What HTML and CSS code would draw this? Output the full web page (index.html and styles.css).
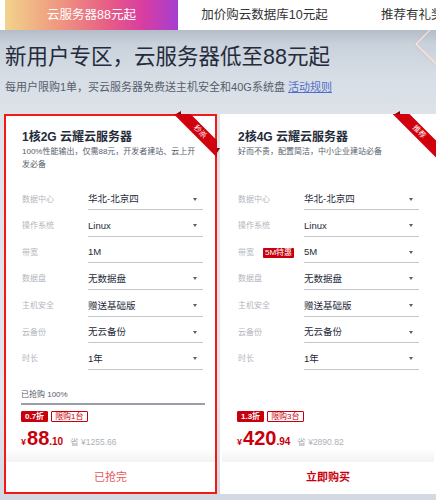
FILE: index.html
```html
<!DOCTYPE html>
<html lang="zh-CN">
<head>
<meta charset="utf-8">
<title>新用户专区</title>
<link rel="stylesheet" href="styles.css">
</head>
<body>
<div class="tabs">
  <div class="tab active">云服务器88元起</div>
  <div class="tab">加价购云数据库10元起</div>
  <div class="tab">推荐有礼奖励翻倍</div>
</div>
<div class="banner">
  <h1 class="headline">新用户专区，云服务器低至88元起</h1>
  <p class="sub">每用户限购1单，买云服务器免费送主机安全和40G系统盘 <a class="rule" href="#">活动规则</a></p>
</div>
<div class="cards">
  <div class="card selected">
    <div class="ribbon"><span>秒杀</span></div>
    <div class="body">
      <h2 class="title">1核2G 云耀云服务器</h2>
      <p class="desc">100%性能输出，仅需88元，开发者建站、云上开发必备</p>
      <div class="rows">
        <div class="row"><span class="label">数据中心</span><span class="select">华北-北京四<i class="caret"></i></span></div>
        <div class="row"><span class="label">操作系统</span><span class="select">Linux<i class="caret"></i></span></div>
        <div class="row"><span class="label">带宽</span><span class="select">1M</span></div>
        <div class="row"><span class="label">数据盘</span><span class="select">无数据盘<i class="caret"></i></span></div>
        <div class="row"><span class="label">主机安全</span><span class="select">赠送基础版<i class="caret"></i></span></div>
        <div class="row"><span class="label">云备份</span><span class="select">无云备份<i class="caret"></i></span></div>
        <div class="row"><span class="label">时长</span><span class="select">1年<i class="caret"></i></span></div>
      </div>
      <div class="progress">已抢购 100%</div>
      <div class="price-block">
        <div class="tags"><span class="tag solid">0.7折</span><span class="tag outline">限购1台</span></div>
        <div class="price"><span class="cur">¥</span><span class="int">88</span><span class="dec">.10</span><span class="save">省 ¥1255.66</span></div>
      </div>
    </div>
    <div class="footer sold">已抢完</div>
  </div>
  <div class="card">
    <div class="ribbon"><span>推荐</span></div>
    <div class="body">
      <h2 class="title">2核4G 云耀云服务器</h2>
      <p class="desc">好而不贵，配置简洁，中小企业建站必备</p>
      <div class="rows">
        <div class="row"><span class="label">数据中心</span><span class="select">华北-北京四<i class="caret"></i></span></div>
        <div class="row"><span class="label">操作系统</span><span class="select">Linux<i class="caret"></i></span></div>
        <div class="row"><span class="label">带宽<em class="hot">5M特惠</em></span><span class="select">5M<i class="caret"></i></span></div>
        <div class="row"><span class="label">数据盘</span><span class="select">无数据盘<i class="caret"></i></span></div>
        <div class="row"><span class="label">主机安全</span><span class="select">赠送基础版<i class="caret"></i></span></div>
        <div class="row"><span class="label">云备份</span><span class="select">无云备份<i class="caret"></i></span></div>
        <div class="row"><span class="label">时长</span><span class="select">1年<i class="caret"></i></span></div>
      </div>
      <div class="price-block">
        <div class="tags"><span class="tag solid">1.3折</span><span class="tag outline">限购3台</span></div>
        <div class="price"><span class="cur">¥</span><span class="int">420</span><span class="dec">.94</span><span class="save">省 ¥2890.82</span></div>
      </div>
    </div>
    <div class="footer">立即购买</div>
  </div>
</div>
</body>
</html>
```
FILE: styles.css
```css
html, body {
  margin: 0;
  padding: 0;
}
body {
  width: 436px;
  min-height: 500px;
  overflow: hidden;
  font-family: "Liberation Sans", "Noto Sans CJK SC", sans-serif;
  color: #252b3a;
  background: linear-gradient(to bottom, #b3bdc8 30px, #c9d1db 44px, #d6dde5 75px, #dee3e9 115px, #e3e7ed 400px, #d2d9e1 500px);
}

/* tabs */
.tabs {
  display: flex;
  height: 30px;
  padding-left: 5px;
  background: #fff;
  overflow: hidden;
  white-space: nowrap;
}
.tab {
  flex: 0 0 173px;
  line-height: 30px;
  text-align: center;
  font-size: 12.5px;
  color: #333;
}
.tab:last-child {
  flex-basis: 160px;
  text-align: left;
  padding-left: 30px;
}
.tab.active {
  color: #fff;
  background: linear-gradient(90deg, #f2d38c 0%, #ef9a80 30%, #e75c86 60%, #d83da2 80%, #a43fd0 100%);
}

/* banner */
.banner {
  position: relative;
  padding: 12px 0 0 5px;
  height: 72px;
  overflow: hidden;
}
.banner::after {
  content: "";
  position: absolute;
  left: 424px;
  top: -7px;
  width: 40px;
  height: 40px;
  border: 1px solid rgba(255, 236, 232, 0.95);
  box-shadow: 0 0 3px rgba(255, 170, 150, 0.7);
  transform: rotate(45deg);
}
.headline {
  margin: 0;
  font-size: 21.5px;
  line-height: 30px;
  font-weight: normal;
  color: #252b3a;
}
.sub {
  margin: 7px 0 0;
  font-size: 11px;
  line-height: 16px;
  color: #575d6c;
}
.rule {
  color: #526ecc;
  text-decoration: underline;
}

/* cards */
.cards {
  display: grid;
  grid-template-columns: 213px 216px;
  column-gap: 3px;
  padding-left: 4px;
}
.card {
  position: relative;
  height: 380px;
  box-sizing: border-box;
  background: #fff;
  border: 2px solid #fff;
  display: flex;
  flex-direction: column;
}
.card.selected {
  border-color: #f41919;
}
.card::before {
  content: "";
  position: absolute;
  top: -5px;
  right: 34px;
  width: 0;
  height: 0;
  border-left: 5px solid transparent;
  border-bottom: 3px solid #8a0009;
}
.card::after {
  content: "";
  position: absolute;
  top: 32px;
  right: -5px;
  width: 0;
  height: 0;
  border-left: 3px solid #8a0009;
  border-bottom: 5px solid transparent;
}
.ribbon {
  position: absolute;
  top: -2px;
  right: -2px;
  width: 44px;
  height: 44px;
  overflow: hidden;
  z-index: 2;
}
.ribbon span {
  position: absolute;
  left: -4px;
  top: 11.5px;
  width: 62px;
  height: 12px;
  line-height: 12px;
  text-align: center;
  background: #d0000c;
  color: #fff;
  font-size: 7.5px;
  transform: rotate(45deg);
}

.body {
  flex: 1;
  display: flex;
  flex-direction: column;
  padding: 13px 12px 9px 16px;
  background: linear-gradient(to bottom, #fff calc(100% - 14px), #f3f3f4 100%);
}
.title {
  margin: 0;
  font-size: 12px;
  line-height: 16px;
  font-weight: bold;
  color: #252b3a;
}
.desc {
  margin: 0;
  font-size: 8px;
  line-height: 13px;
  min-height: 26px;
  color: #575d6c;
}
.rows {
  margin-top: 18px;
  display: flex;
  flex-direction: column;
  gap: 5.67px;
}
.row {
  display: grid;
  grid-template-columns: 66px 115px;
  align-items: center;
}
.label {
  display: flex;
  align-items: center;
  gap: 9px;
  font-size: 8px;
  line-height: 20px;
  color: #b3b6bd;
}
.hot {
  font-style: normal;
  font-size: 8px;
  line-height: 10px;
  padding: 0 2px;
  background: #c7000b;
  color: #fff;
  border-radius: 1px;
}
.select {
  display: flex;
  justify-content: space-between;
  align-items: center;
  height: 20px;
  line-height: 20px;
  padding-right: 6px;
  border-bottom: 1px solid #c5c7cc;
  font-size: 9.5px;
  color: #252b3a;
}
.caret {
  width: 0;
  height: 0;
  border-left: 2.5px solid transparent;
  border-right: 2.5px solid transparent;
  border-top: 3px solid #575d6c;
}

.progress {
  margin: 19px 0 0 -1px;
  width: 184px;
  padding-bottom: 2px;
  border-bottom: 2px solid #9a9ea6;
  font-size: 8px;
  line-height: 12px;
  color: #575d6c;
}

.price-block {
  margin-top: auto;
  margin-left: -1px;
}
.tags {
  display: flex;
  gap: 3px;
}
.tag {
  font-size: 8px;
  line-height: 9px;
  padding: 0 3px;
  border: 1px solid #c7000b;
  border-radius: 1px;
  font-weight: bold;
}
.tag.solid {
  background: #c7000b;
  color: #fff;
}
.tag.outline {
  color: #c7000b;
  font-weight: normal;
}
.price {
  display: flex;
  align-items: baseline;
  margin-top: 5px;
  line-height: 22px;
  color: #c7000b;
  font-weight: bold;
}
.cur {
  font-size: 9px;
  margin-right: 1px;
}
.int {
  font-size: 20px;
}
.dec {
  font-size: 10px;
}
.save {
  margin-left: 7px;
  font-size: 8.5px;
  font-weight: normal;
  color: #adb0b8;
}

.footer {
  height: 30px;
  line-height: 30px;
  text-align: center;
  font-size: 11px;
  font-weight: bold;
  color: #c7000b;
}
.footer.sold {
  font-weight: normal;
  color: #e6585b;
}
```
